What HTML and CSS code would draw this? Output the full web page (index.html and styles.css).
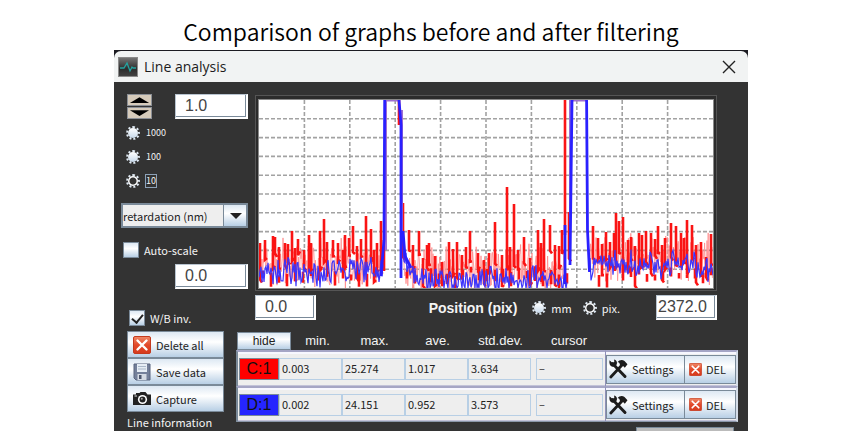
FILE: index.html
```html
<!DOCTYPE html>
<html lang="en">
<head>
<meta charset="utf-8">
<title>Line analysis</title>
<link rel="stylesheet" href="styles.css">
</head>
<body>
<svg class="defs" aria-hidden="true">
  <defs>
    <linearGradient id="redFill" x1="0" y1="0" x2="0" y2="1">
      <stop offset="0" stop-color="#f08a68"/><stop offset=".5" stop-color="#e2492a"/><stop offset="1" stop-color="#d63a1c"/>
    </linearGradient>
    <linearGradient id="scopeFill" x1="0" y1="0" x2="0" y2="1">
      <stop offset="0" stop-color="#777"/><stop offset=".6" stop-color="#2c2c2c"/><stop offset="1" stop-color="#444"/>
    </linearGradient>
    <symbol id="cross" viewBox="0 0 18 18">
      <rect x=".5" y=".5" width="17" height="17" rx="1.5" fill="url(#redFill)" stroke="#c43a1e"/>
      <path d="M4.500 4.500l9 9M13.500 4.500l-9 9" stroke="#fff" stroke-width="2.400" stroke-linecap="round"/>
    </symbol>
    <symbol id="tools" viewBox="0 0 20 20">
      <path d="M4.500 4.500L17 17.500" stroke="#1c1c1c" stroke-width="3" stroke-linecap="round"/>
      <path d="M1.500 1.200l3 2.800 1.800-1-.2-2.500c2 .4 3.300 2.200 2.800 4.300-.4 2-2.500 3.400-4.600 2.900C2.200 7.200.9 5 1.500 1.200z" fill="#1c1c1c"/>
      <path d="M14.500 5.500L2.800 18" stroke="#1c1c1c" stroke-width="2.800" stroke-linecap="round"/>
      <path d="M9.500 3.200c1.800-2.400 4.800-3 7-1.200l3 3.300-2.700 3.400-2.200-2.200-2 .3-1-1.800c.3-1.300-.8-1.800-2.100-1.800z" fill="#1c1c1c"/>
    </symbol>
  </defs>
</svg>

<h1 class="caption">Comparison of graphs before and after filtering</h1>

<main class="window">
  <header class="titlebar">
    <svg class="app-icon" viewBox="0 0 20 20" aria-hidden="true">
      <rect x=".5" y=".5" width="19" height="19" fill="url(#scopeFill)" stroke="#8a8a8a"/>
      <path d="M2 11h4l3-5 3 8 2-4 1 1h3" fill="none" stroke="#25a3a0" stroke-width="1.300"/>
    </svg>
    <h2 class="window-title">Line analysis</h2>
    <button class="close" type="button" aria-label="Close">
      <svg viewBox="0 0 14 14"><path d="M1 1l12 12M13 1L1 13" stroke="#222" stroke-width="1.400"/></svg>
    </button>
  </header>

  <section class="upper">
    <div class="controls">
      <div class="scale-row">
        <div class="spinner">
          <button type="button" aria-label="Increase"><svg viewBox="0 0 24 8"><path d="M2 7L12 1l10 6z"/></svg></button>
          <button type="button" aria-label="Decrease"><svg viewBox="0 0 24 8"><path d="M2 1l10 6 10-6z"/></svg></button>
        </div>
        <input class="number inset" type="text" value="1.0" aria-label="Scale maximum">
      </div>
      <div class="step-list">
        <label class="choice"><input type="radio" name="step"><span>1000</span></label>
        <label class="choice"><input type="radio" name="step"><span>100</span></label>
        <label class="choice"><input type="radio" name="step" checked><span class="focused">10</span></label>
      </div>
      <div class="combo">
        <select aria-label="Quantity"><option>retardation (nm)</option></select>
      </div>
      <label class="check"><input type="checkbox"><span>Auto-scale</span></label>
      <input class="number inset minimum" type="text" value="0.0" aria-label="Scale minimum">
      <label class="check invert"><input type="checkbox" checked><span>W/B inv.</span></label>
    </div>

    <div class="graph">
      <div class="plot-frame">
        <svg class="plot" id="plot" viewBox="0 0 454 188" preserveAspectRatio="none" role="img" aria-label="Line profile"></svg>
      </div>
      <div class="axis-row">
        <input class="number short" type="text" value="0.0" aria-label="Position start">
        <span class="axis-name">Position (pix)</span>
        <label class="choice unit"><input type="radio" name="unit"><span>mm</span></label>
        <label class="choice unit"><input type="radio" name="unit" checked><span>pix.</span></label>
        <input class="number short tight" type="text" value="2372.0" aria-label="Position end">
      </div>
    </div>
  </section>

  <section class="lower">
    <div class="actions">
      <button class="steel action" type="button"><svg viewBox="0 0 18 18"><use href="#cross"/></svg>Delete all</button>
      <button class="steel action" type="button">
        <svg viewBox="0 0 18 18"><path d="M1 1h16v16H3l-2-2z" fill="#74809a" stroke="#59647e"/><rect x="4" y="1" width="10" height="8" fill="#e6edf5"/><path d="M5 3.500h8M5 6h8" stroke="#aab8c9"/><rect x="4.500" y="11" width="9" height="6" fill="#d4dae3"/><rect x="6" y="12" width="2.500" height="4" fill="#4c566e"/></svg>Save data</button>
      <button class="steel action" type="button">
        <svg viewBox="0 0 18 18"><path d="M0 4.500h3V3h3.500l1-1h5l2 2.500H18V15H0z" fill="#222"/><circle cx="9.500" cy="9.500" r="4.600" fill="#fff"/><circle cx="9.500" cy="9.500" r="3" fill="#222"/><circle cx="8.800" cy="8.700" r="1" fill="#aaa"/><path d="M1.500 6h2.500" stroke="#ddd"/></svg>Capture</button>
      <p class="section-name">Line information</p>
    </div>

    <div class="results">
      <table>
        <colgroup><col class="c-swatch"><col class="c-pad"><col class="c-min"><col class="c-val"><col class="c-val"><col class="c-val"><col class="c-cursor"><col class="c-tools"></colgroup>
        <thead>
          <tr>
            <th colspan="2" class="hide-cell"><button class="steel hide" type="button">hide</button></th>
            <th>min.</th><th>max.</th><th>ave.</th><th>std.dev.</th><th>cursor</th><td></td>
          </tr>
        </thead>
        <tbody>
          <tr>
            <th class="swatch"><span class="chip red">C:1</span></th>
            <td colspan="2"><span class="field">0.003</span></td><td><span class="field">25.274</span></td><td><span class="field">1.017</span></td><td><span class="field">3.634</span></td><td class="cursor"><span class="field">–</span></td>
            <td class="tools"><div><button class="steel settings" type="button"><svg viewBox="0 0 20 20"><use href="#tools"/></svg>Settings</button><button class="steel del" type="button"><svg viewBox="0 0 18 18"><use href="#cross"/></svg>DEL</button></div></td>
          </tr>
          <tr>
            <th class="swatch"><span class="chip blue">D:1</span></th>
            <td colspan="2"><span class="field">0.002</span></td><td><span class="field">24.151</span></td><td><span class="field">0.952</span></td><td><span class="field">3.573</span></td><td class="cursor"><span class="field">–</span></td>
            <td class="tools"><div><button class="steel settings" type="button"><svg viewBox="0 0 20 20"><use href="#tools"/></svg>Settings</button><button class="steel del" type="button"><svg viewBox="0 0 18 18"><use href="#cross"/></svg>DEL</button></div></td>
          </tr>
        </tbody>
      </table>
      <div class="panel-edge"></div>
    </div>
  </section>
</main>
<script src="plot.js"></script>
</body>
</html>
```
FILE: styles.css
```css
* { box-sizing: border-box; }
html, body { height: 100%; }
body {
  margin: 0;
  overflow: hidden;
  background: #fff;
  color: #000;
  font-family: "Noto Sans CJK JP", "Noto Sans", sans-serif;
  display: flex;
  flex-direction: column;
}
.defs { position: absolute; width: 0; height: 0; }
button, input, select { font: inherit; margin: 0; padding: 0; border-radius: 0; }

.caption {
  margin: 0;
  padding-top: 14px;
  height: 50px;
  flex: none;
  font-size: 23px;
  line-height: 34px;
  font-weight: 350;
  text-align: center;
}

.window {
  flex: 1 0 auto;
  margin: 0 114px;
  padding-top: 1px;
  background: linear-gradient(#1c1c22 0 12px, #333 12px);
  font-size: 11px;
  line-height: 16px;
  color: #f4f4f4;
}
.titlebar {
  display: flex;
  align-items: center;
  height: 31px;
  padding: 0 12px 0 4px;
  border-radius: 7px 7px 0 0;
  background: #f1f3f3;
  color: #1c1c1c;
}
.app-icon { width: 20px; height: 20px; }
.window-title {
  margin: 0 auto 0 6px;
  font: 400 14px/20px "Open Sans", "Noto Sans", sans-serif;
}
.close { border: 0; background: none; width: 14px; height: 14px; }
.close svg { display: block; }

.upper { display: flex; padding-top: 12px; }
.controls {
  flex: none;
  width: 141px;
  padding: 0 7px;
  display: flex;
  flex-direction: column;
}
.scale-row { display: flex; justify-content: space-between; padding-left: 6px; }
.spinner { width: 25px; display: grid; gap: 1px; align-content: start; }
.spinner button {
  height: 12px;
  border: 1px solid #8b8f96;
  background: #d6cbbb;
}
.spinner svg { display: block; width: 100%; height: 8px; }
.number {
  height: 25px;
  padding: 0 9px;
  border: 1px solid #b8c4d0;
  border-right: 2px solid #fff;
  border-bottom: 2px solid #fff;
  background: #fff;
  box-shadow: inset -1px -1px 0 #7a8a99;
  color: #444;
  font: 16px/20px "Liberation Sans", Arial, sans-serif;
}
.inset { width: 73px; }
.short { width: 61px; }
.tight { padding: 0 1px; }
.minimum { align-self: flex-end; margin-top: 6px; }

.step-list { padding: 2px 0 0 5px; display: grid; }
.choice { display: flex; align-items: center; height: 24px; gap: 6px; font-size: 9px; line-height: 12px; }
.choice input {
  appearance: none;
  width: 14px;
  height: 14px;
  border: 2px dotted #dfe9f3;
  border-radius: 50%;
  background: linear-gradient(#fff, #c8daec) padding-box;
}
.choice input:checked {
  background: radial-gradient(circle, #333 0 3px, #fff 4px) padding-box;
}
.focused { outline: 1px solid #8da2b8; }
.combo { position: relative; height: 25px; margin-top: 10px; }
.combo select {
  appearance: none;
  width: 100%;
  height: 25px;
  padding-left: 0;
  border: 2px solid #7a8a99;
  background: #eee;
  color: #222;
}
.combo::before {
  content: "";
  position: absolute;
  inset: 2px 2px 2px auto;
  width: 22px;
  border-left: 1px solid #7a8a99;
  background: linear-gradient(#dde8f3, #fff 40%, #b8cfe5);
  pointer-events: none;
}
.combo::after {
  content: "";
  position: absolute;
  right: 6px;
  top: 10px;
  border: 6px solid transparent;
  border-top-color: #222;
  border-bottom: 0;
  pointer-events: none;
}
.check { display: flex; align-items: center; gap: 5px; margin: 13px 0 0 2px; height: 17px; }
.check input {
  appearance: none;
  width: 16px;
  height: 16px;
  border: 1px solid #7a8a99;
  background: linear-gradient(#dde8f3, #fff 40%, #b8cfe5);
  display: grid;
  place-items: center;
}
.check input:checked::after {
  content: "";
  width: 9px;
  height: 5px;
  border: solid #222;
  border-width: 0 0 2px 2px;
  transform: rotate(-50deg);
}
.invert { margin: 20px 0 0 8px; }

.graph { flex: 1; min-width: 0; padding-right: 31px; }
.plot-frame {
  margin-top: 1px;
  border: 1px solid #555;
  padding: 4px 3px 2px;
  background: #2c2c2c;
}
.plot { display: block; width: 100%; height: 188px; background: #fff; outline: 1px solid #8a8a8a; }
.grid { stroke: #a2a2a2; stroke-width: 1.600; stroke-dasharray: 4 2; fill: none; }
.haze { stroke: #ff8c8c; stroke-width: .8; fill: none; }
.peaks { stroke: #fa1414; stroke-width: 2.600; fill: none; }
.edge { stroke: #a070d0; stroke-width: 2; fill: none; }
.trace { stroke: #3c34fa; stroke-width: 1.200; fill: none; }
.wall { stroke: #2a20ff; stroke-width: 2.800; fill: none; }

.axis-row { display: flex; align-items: center; height: 25px; margin-top: 4px; }
.axis-name {
  margin: 0 15px 0 auto;
  font: bold 14px/20px "Liberation Sans", Arial, sans-serif;
}
.unit { gap: 5px; margin-right: 11px; font-size: 11px; }
.unit + .number { margin-left: 25px; }

.lower { display: flex; padding: 5px 10px 0 13px; }
.actions { flex: none; width: 109px; padding-right: 12px; }
.steel {
  border: 1px solid #7a8a99;
  background: linear-gradient(#dde8f3, #fff 40%, #b8cfe5);
  color: #222;
  display: flex;
  align-items: center;
}
.action { width: 100%; height: 27px; padding-left: 5px; gap: 5px; }
.action svg { width: 18px; height: 18px; }
.section-name { margin: 2px 0 0; white-space: nowrap; }

.results { flex: 1; min-width: 0; }
table { width: 100%; table-layout: fixed; border-collapse: separate; border-spacing: 0; color: #222; }
th, td { padding: 0; font-weight: 400; text-align: left; }
.c-swatch { width: 43px; }
.c-pad { width: 12px; }
.c-min { width: 51px; }
.c-val { width: 63px; }
.c-cursor { width: 74px; }
.c-tools { width: 133px; }
thead th { height: 19px; padding-left: 2px; color: #f4f4f4; text-align: center; font: 13px/17px "Liberation Sans", Arial, sans-serif; }
thead .hide-cell { padding: 0; }
.hide { width: 54px; height: 18px; margin-left: 1px; justify-content: center; font: 12px/14px "Liberation Sans", Arial, sans-serif; }
tbody th, tbody td {
  height: 36px;
  background: #eee;
  border-top: 2px solid #a5a5c5;
  box-shadow: inset 0 2px 0 #f7f7ff, inset 0 -1px 0 #c2c2d8;
}
tbody tr:last-child > * { border-bottom: 1px solid #8a96a8; }
.swatch { border-left: 2px solid #7a8a99; padding-left: 1px; }
.chip {
  display: block;
  height: 22px;
  border: 1px solid #7a8a99;
  color: #111;
  text-align: center;
  font: 16px/20px "Liberation Sans", Arial, sans-serif;
}
.red { background: #f00; }
.blue { background: #2525ff; }
.field { display: block; height: 22px; padding-left: 2px; border: 1px solid #b8cfe5; line-height: 18px; }
.cursor { padding: 0 2px 0 5px; }
tbody .tools { border-left: 1px solid #9090b8; border-right: 2px solid #d5dde8; }
.tools div { display: flex; }
.tools .steel { height: 29px; }
.settings { flex: 1; padding-left: 1px; gap: 4px; }
.settings svg { width: 20px; height: 20px; }
.del { width: 51px; padding-left: 4px; gap: 4px; border-left: 0; }
.del svg { width: 13px; height: 13px; }
.panel-edge { width: 98px; height: 12px; margin: 5px 4px 0 auto; border: 1px solid #7a8a99; background: #bbb; }
```
FILE: plot.js
```js
const NS = "http://www.w3.org/2000/svg";
const plot = document.getElementById("plot");
const WIDTH = 454, HEIGHT = 188;

// Local maxima of the unfiltered profile: [x, y].
const peaks = [
  [1,143],[6,140],[14,136],[16,137],[20,147],[26,143],[29,144],[33,131],[36,148],[39,139],[45,150],[50,135],[52,143],
  [61,131],[65,119],[68,142],[74,140],[79,143],[84,150],[86,135],[90,138],[94,126],[98,146],[102,139],[107,116],
  [112,129],[115,150],[118,143],[122,121],[144,103],[150,130],[154,145],[160,131],[164,158],[168,145],[170,143],
  [176,156],[183,162],[190,142],[194,149],[198,142],[203,155],[207,147],[211,131],[219,153],[225,160],[230,153],[236,122],
  [243,155],[248,87],[251,147],[255,104],[259,150],[265,137],[271,158],[279,130],[282,143],[285,119],[291,125],[296,145],
  [300,146],[303,130],[310,112],[334,126],[339,138],[343,144],[347,132],[351,142],[355,133],[357,113],[360,121],[364,117],
  [369,140],[372,137],[376,146],[380,133],[383,135],[387,131],[392,133],[396,139],[399,126],[403,145],[406,138],[412,123],
  [417,126],[422,133],[425,138],[428,120],[433,125],[437,145],[442,142],[447,157],[452,134]
];

let seed = 29;
function random() {
  seed = (seed * 1103515245 + 12345) % 2147483648;
  return seed / 2147483648;
}
function draw(className, d) {
  const path = document.createElementNS(NS, "path");
  path.setAttribute("class", className);
  path.setAttribute("d", d);
  plot.append(path);
}
function noise(from, to, step, centre, spread) {
  let d = "";
  for (let x = from; x <= to; x += step) {
    const y = Math.min(HEIGHT, centre(x) + (random() + random() - 1) * spread);
    d += (d ? "L" : "M") + x.toFixed(1) + " " + y.toFixed(1);
  }
  return d;
}

let grid = "";
for (let i = 1; i < 10; i++) {
  grid += `M0 ${i * HEIGHT / 10}H${WIDTH}M${i * WIDTH / 10} 0V${HEIGHT}`;
}
draw("grid", grid);

const segments = [
  { from: 0, to: 124, red: 163, blue: x => 174 - 9 * Math.exp(-(((x - 98) / 16) ** 2)) },
  { from: 144, to: 308, red: 169, blue: x => 181 - 32 * Math.exp(-(x - 144) / 7) },
  { from: 331, to: 454, red: 158, blue: x => 164 + (x > 436 ? 8 : 0) }
];
for (const s of segments) draw("haze", noise(s.from, s.to, 0.6, () => s.red, 28));

// Each maximum falls back towards the noise floor; tall ones reach further down.
let spikes = "";
for (const [x, y] of peaks) {
  const foot = Math.min(186, Math.max(y + 16, 150) + random() * 24);
  spikes += `M${x} ${y}V${foot.toFixed(1)}l2 ${(random() * 10 - 6).toFixed(1)}`;
}
for (let x = 4; x < WIDTH; x += 8) {
  if ((x > 122 && x < 146) || (x > 308 && x < 333)) continue;
  const y = 166 + random() * 10;
  spikes += `M${x} ${y.toFixed(1)}v${(5 + random() * 10).toFixed(1)}`;
}
spikes += "M306 0V135M140 0V25M125 140V171";
draw("peaks", spikes);

draw("edge", "M126 0.5H141M313 0.5H328M127 0V150M143 10V140M311 0V150");
for (const s of segments) draw("trace", noise(s.from, s.to, 1, s.blue, 17));
draw("wall", "M122 176L125 140L125.700 0M140 0L142 25V178M144 131L146 156L152 168M306 125V184M311 165L313 0M327.600 0L328.500 130L330.500 172");
```
